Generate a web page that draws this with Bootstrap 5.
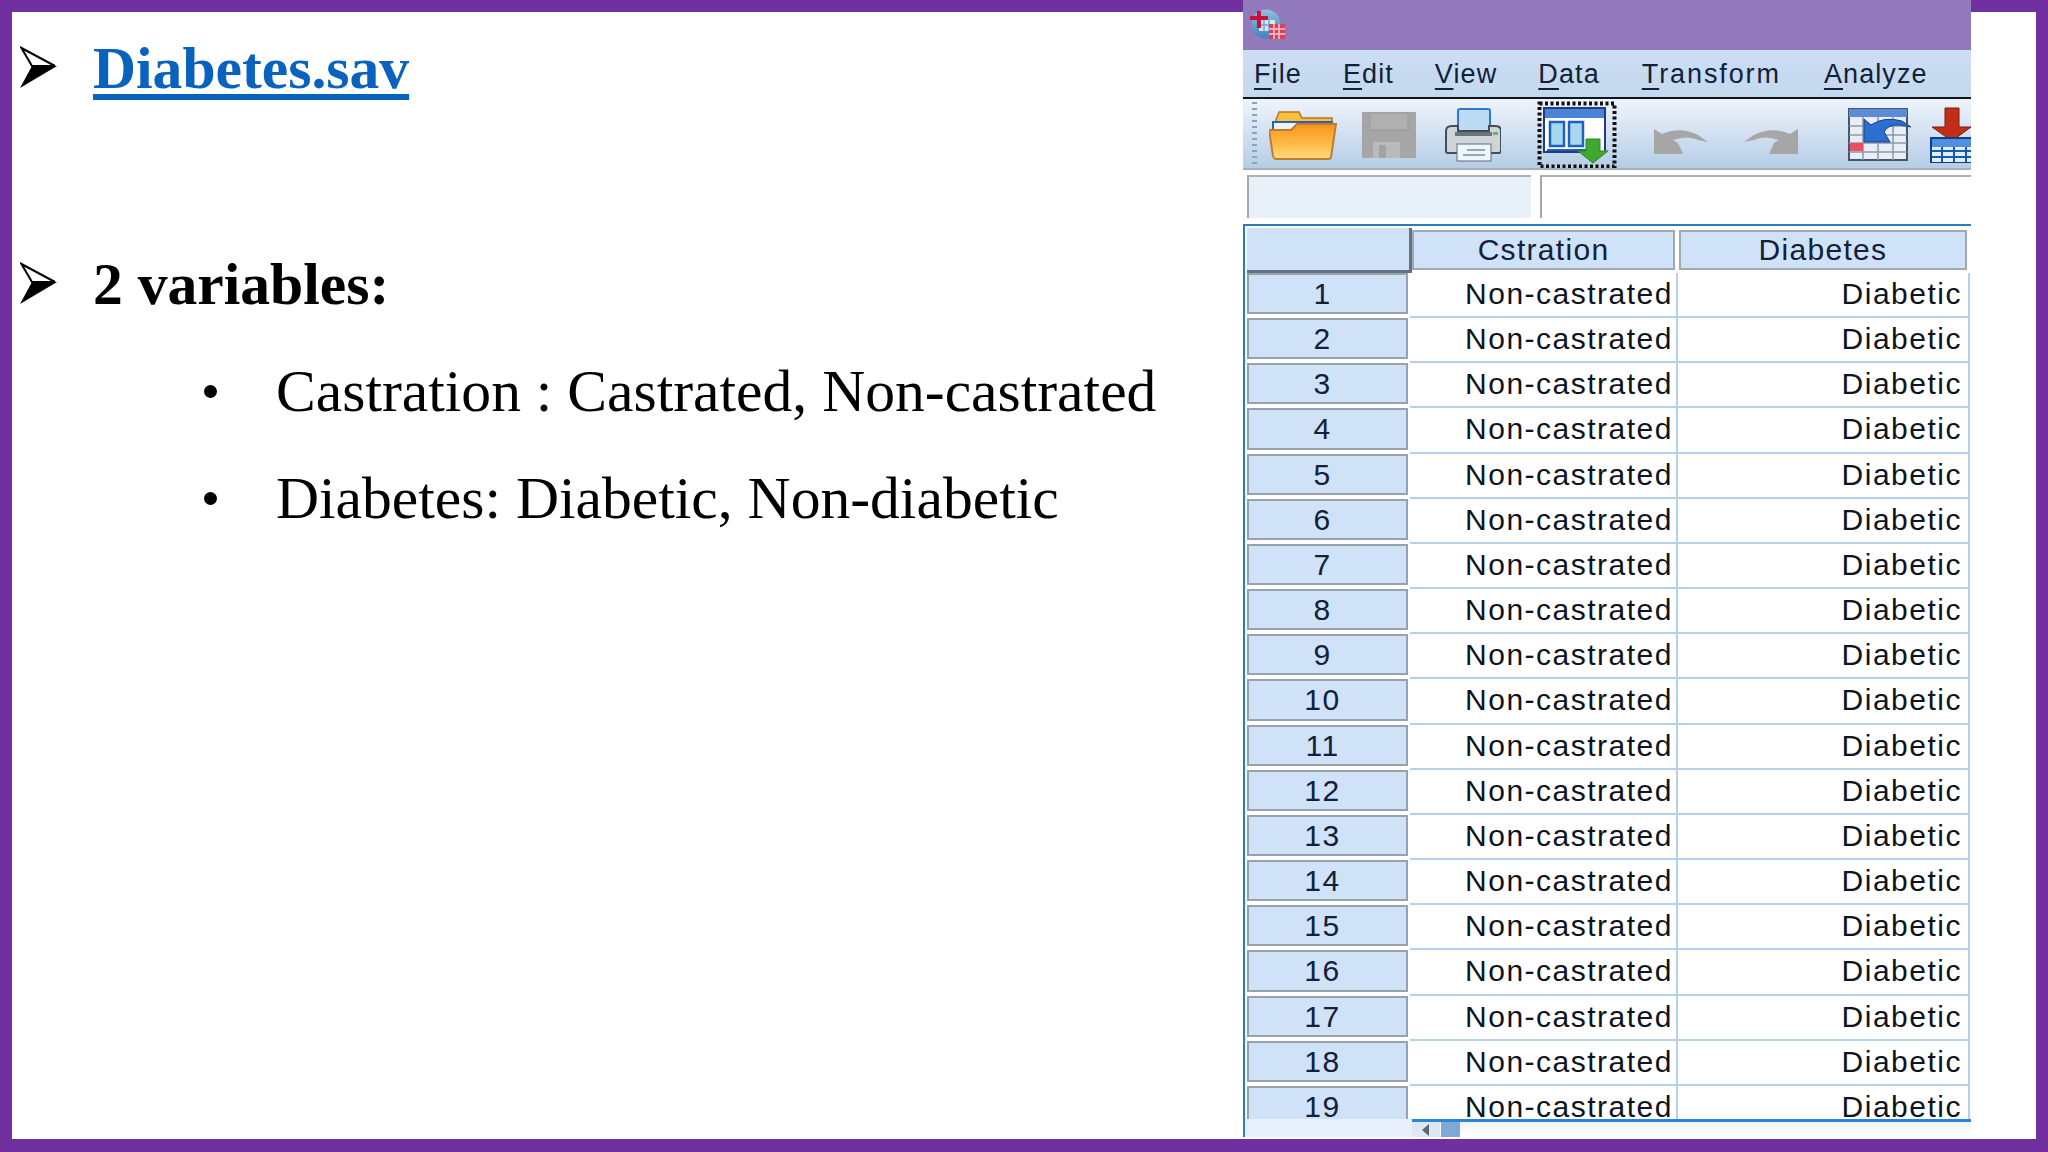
<!DOCTYPE html>
<html lang="en"><head><meta charset="utf-8"><title>Diabetes.sav</title>
<link href="https://cdn.jsdelivr.net/npm/bootstrap@5.3.0/dist/css/bootstrap.min.css" rel="stylesheet">
<style>
html,body{margin:0;height:1152px;overflow:hidden}
.slide-frame{width:2048px;height:1152px;background:#7030a0;padding:12px 12px 13px;font-family:"Liberation Serif",serif;color:#000}
.slide-canvas{background:#fff;height:1127px;display:flex;overflow:visible}
.notes{width:1231px;flex:none;padding-left:8px;font-size:59.6px;line-height:72px}
.head-line{display:flex;align-items:center;font-weight:700;gap:36px;height:72px}
.head-one{margin-top:20px}
.head-two{margin-top:144px}
.arrow-mark{width:37px;height:42px;flex:none;margin-top:-3px}
.head-line a{color:#0a62bf;text-decoration:underline;text-decoration-thickness:6px;text-underline-offset:6px}
.sub-list{list-style:none;margin:35px 0 0;padding:0 0 0 256px}
.sub-list li{position:relative;height:72px;margin-bottom:35px;line-height:72px;white-space:nowrap}
.sub-list li::before{content:"";position:absolute;left:-72px;top:30px;width:13px;height:13px;border-radius:50%;background:#000}
.spss-win{width:728px;flex:none;margin-top:-12px;height:1137px;background:#fff;font-family:"Liberation Sans",sans-serif;color:#12203a;display:flex;flex-direction:column;overflow:hidden}
.spss-title{height:50px;background:#9179bc;padding:9px 0 0 7px;flex:none}
.spss-title svg{width:36px;height:30px;display:block}
.spss-menu{height:49px;flex:none;background:linear-gradient(#cbdef3,#c4d8ee);border-bottom:2px solid #10151c;display:flex;font-size:27px;letter-spacing:1.1px;padding:2px 0 0 11px;gap:41px;align-items:center}
.spss-menu u{text-underline-offset:5px;text-decoration-thickness:2px}
.menu-wide{letter-spacing:1.9px;margin-left:1px}
.menu-last{margin-left:2px}
.spss-tools{height:71px;flex:none;background:linear-gradient(#eff4fc,#b5cde6);border-bottom:2px solid #a7b0ba;display:flex;align-items:center;position:relative;overflow:hidden;padding-top:2px}
.grip{width:5px;height:66px;margin-left:9px;flex:none;background:repeating-linear-gradient(#8fa3b8 0 2px,transparent 2px 6px)}
.ic{display:block;flex:none}
.i-open{width:68px;height:50px;margin-left:12px}
.i-save{width:54px;height:46px;margin-left:25px}
.i-print{width:56px;height:54px;margin-left:29px}
.i-data{width:80px;height:68px;margin-left:36px}
.i-undo{width:54px;height:26px;margin-left:37px;margin-top:15px}
.i-redo{width:54px;height:26px;margin-left:36px;margin-top:15px}
.i-vars{width:66px;height:54px;margin-left:50px}
.i-imp{width:44px;height:56px;margin-left:16px}
.cell-bar{height:54px;flex:none;display:flex;padding:5px 0 6px 4px;background:#fff;gap:9px}
.name-box{width:284px;background:#e8f0fa;border-top:2px solid #b0b0b0;border-left:2px solid #a8a8a8}
.value-box{flex:1;border-top:2px solid #b0b0b0;border-left:2px solid #a8a8a8}
.sheet{flex:1;border-top:2px solid #2c7cbc;border-left:2px solid #2c7cbc;display:flex;flex-direction:column;min-height:0}
.sheet-head{display:grid;grid-template-columns:167px 265px 290px;height:47px;flex:none;font-size:30px;letter-spacing:1.3px;line-height:42px;padding-top:2px}
.corner{margin-left:2px;background:#cfe2f8;border-right:3px solid #66727f;border-bottom:3px solid #66727f}
.col-title{background:#cfe2f8;border:2px solid #a0a9b3;text-align:center;margin:2px 2px 3px 0;line-height:35px}
.col-title:last-child{margin:2px 0 3px 2px}
.sheet-body{height:846px;flex:none;overflow:hidden;font-size:30px;letter-spacing:1.5px}
.sheet-line{display:grid;grid-template-columns:165px 268px 292px;height:45.17px;line-height:42px}
.row-no{margin:0 2px 4px 2px;background:#cfe2f8;border:2px solid #98a2ac;text-align:center;line-height:38px;padding-right:10px;overflow:hidden}
.sheet-line>span:nth-child(n+2){text-align:right;padding-right:3px;border-right:2px solid #b6d0ea;border-bottom:2px solid #b6d0ea;color:#0d1420}
.sheet-line>span:nth-child(3){padding-right:6px}
.sheet-foot{flex:1;display:flex;min-height:0}
.foot-left{width:167px;background:#e8f0fb}
.foot-bar{flex:1;border-top:3px solid #2c86d8;display:flex;background:linear-gradient(#eef3f8,#fff 14px)}
.foot-arrow{width:28px;background:#dfe8f2;display:flex;align-items:center;justify-content:center}
.foot-arrow svg{width:8px;height:12px}
.foot-thumb{width:19px;background:#7ea8d6;margin-left:1px}
</style></head><body>
<div class="slide-frame"><div class="slide-canvas">
<section class="notes">
<div class="head-line head-one"><svg class="arrow-mark" viewBox="0 0 37 42"><path d="M1.5 2 35 20H12z" fill="#fff" stroke="#000" stroke-width="2"/><path d="M0 42 12 20H37z" fill="#000"/></svg><a href="#">Diabetes.sav</a></div>
<div class="head-line head-two"><svg class="arrow-mark" viewBox="0 0 37 42"><path d="M1.5 2 35 20H12z" fill="#fff" stroke="#000" stroke-width="2"/><path d="M0 42 12 20H37z" fill="#000"/></svg><span>2 variables:</span></div>
<ul class="sub-list"><li>Castration : Castrated, Non-castrated</li><li>Diabetes: Diabetic, Non-diabetic</li></ul>
</section>
<section class="spss-win">
<div class="spss-title"><svg viewBox="0 0 36 30"><defs><linearGradient id="globe" x1="0" y1="0" x2="0" y2="1"><stop offset="0" stop-color="#8fc0e2"/><stop offset="1" stop-color="#3f84bb"/></linearGradient></defs><circle cx="16" cy="15" r="14.500" fill="url(#globe)"/><path d="M9 11h16v11H9z" fill="#d7e6f2"/><path d="M9 16h16M14 11v11M19 11v11" stroke="#7aa4c8" stroke-width="1.500"/><path d="M9 2v17M0 9h18" stroke="#c8103a" stroke-width="4"/><rect x="19" y="15" width="16" height="15" fill="#d9405e"/><path d="M19 20h16M19 25h16M24 15v15M29 15v15" stroke="#f6c6d0" stroke-width="1.500"/></svg></div>
<nav class="spss-menu"><span><u>F</u>ile</span><span><u>E</u>dit</span><span><u>V</u>iew</span><span><u>D</u>ata</span><span class="menu-wide"><u>T</u>ransform</span><span class="menu-last"><u>A</u>nalyze</span></nav>
<div class="spss-tools"><div class="grip"></div>
<svg class="ic i-open" viewBox="0 0 68 50"><path d="M7 10 10 2h20l3 6h30v6H7z" fill="#f6c23a" stroke="#b9742a" stroke-width="1.500"/><path d="M4 12h59v20H4z" fill="#eef4fb" stroke="#2a62b8" stroke-width="2"/><defs><linearGradient id="fold" x1="0" y1="0" x2="0" y2="1"><stop offset="0" stop-color="#f8941a"/><stop offset=".55" stop-color="#ffb845"/><stop offset="1" stop-color="#ffdf80"/></linearGradient></defs><path d="M0 20h22l6-6h39l-5 33q0 2-3 2H7q-2 0-3-3z" fill="url(#fold)" stroke="#c47a2c" stroke-width="2"/></svg>
<svg class="ic i-save" viewBox="0 0 54 46"><rect width="54" height="46" rx="1" fill="#a6a6a6"/><rect x="8" y="1" width="38" height="17" fill="#b0b0b0" stroke="#9b9b9b"/><rect x="11" y="30" width="27" height="16" fill="#bababa"/><rect x="17" y="33" width="7" height="13" fill="#a3a3a3"/></svg>
<svg class="ic i-print" viewBox="0 0 56 54"><rect x="13" y="1" width="32" height="22" rx="2" fill="#bcdcf6" stroke="#2b78d0" stroke-width="2"/><path d="M1 23q0-5 6-5h6v5h31v-5h6q6 0 6 5v20q0 2-3 2H3q-2 0-2-2z" fill="#cfd4d9" stroke="#444c55" stroke-width="2"/><rect x="10" y="24" width="37" height="4" fill="#6b747d"/><rect x="48" y="24" width="5" height="3" fill="#5dbb58"/><rect x="12" y="36" width="34" height="17" fill="#eef6fd" stroke="#5e6a76"/><path d="M22 42h18M18 47h22" stroke="#7c8da0" stroke-width="1.500"/></svg>
<svg class="ic i-data" viewBox="0 0 80 68"><rect x="2.500" y="2.500" width="75" height="63" fill="none" stroke="#111" stroke-width="4" stroke-dasharray="3 2.500"/><rect x="7" y="7" width="61" height="44" fill="#fff" stroke="#233a8a" stroke-width="2"/><rect x="8" y="8" width="59" height="9" fill="#4a84d6"/><rect x="13" y="21" width="14" height="24" fill="#a8d8f0" stroke="#1d62b8" stroke-width="2.500"/><rect x="32" y="21" width="14" height="24" fill="#a8d8f0" stroke="#1d62b8" stroke-width="2.500"/><path d="M10 49h40" stroke="#1d62b8" stroke-width="2"/><path d="M49 38h14v12h8L56 62 41 50h8z" fill="#3ea82f" stroke="#2a8a24"/></svg>
<svg class="ic i-undo" viewBox="0 0 54 26"><path d="M0 0 8 5Q26-3 44 6L54 13 44 11Q34 6 19 11L24 14 29 25H0z" fill="#a6a6a6"/></svg>
<svg class="ic i-redo" viewBox="0 0 54 26"><path d="M54 0 46 5Q28-3 10 6L0 13 10 11Q20 6 35 11L30 14 25 25H54z" fill="#a6a6a6"/></svg>
<svg class="ic i-vars" viewBox="0 0 66 54"><rect x="1" y="1" width="58" height="51" fill="#e8eef5" stroke="#46566a" stroke-width="2"/><rect x="1" y="1" width="58" height="8" fill="#5a8cd8"/><path d="M15 9v43M30 9v43M45 9v43M1 18h58M1 27h58M1 35h58M1 44h58" stroke="#8b99a8" stroke-width="1.500"/><rect x="2" y="35" width="13" height="8" fill="#ee4f60"/><path d="M16 11 23 17Q36 8 54 13L63 19 52 17Q40 16 36 24L42 34H16z" fill="#2b6fd0" stroke="#1a3f88"/></svg>
<svg class="ic i-imp" viewBox="0 0 44 56"><path d="M15 1h14v19h12L22 34 2 20h13z" fill="#c22e16" stroke="#7e1a10"/><rect x="1" y="31" width="50" height="25" fill="#dff0fb" stroke="#0d3f90" stroke-width="2"/><rect x="2" y="32" width="48" height="8" fill="#4f90e0"/><path d="M1 44h50M1 50h50M12 40v15M24 40v15M36 40v15" stroke="#1658b8" stroke-width="2"/></svg>
</div>
<div class="cell-bar"><div class="name-box"></div><div class="value-box"></div></div>
<div class="sheet">
<div class="sheet-head"><div class="corner"></div><div class="col-title">Cstration</div><div class="col-title">Diabetes</div></div>
<div class="sheet-body">
<div class="sheet-line"><span class="row-no">1</span><span>Non-castrated</span><span>Diabetic</span></div>
<div class="sheet-line"><span class="row-no">2</span><span>Non-castrated</span><span>Diabetic</span></div>
<div class="sheet-line"><span class="row-no">3</span><span>Non-castrated</span><span>Diabetic</span></div>
<div class="sheet-line"><span class="row-no">4</span><span>Non-castrated</span><span>Diabetic</span></div>
<div class="sheet-line"><span class="row-no">5</span><span>Non-castrated</span><span>Diabetic</span></div>
<div class="sheet-line"><span class="row-no">6</span><span>Non-castrated</span><span>Diabetic</span></div>
<div class="sheet-line"><span class="row-no">7</span><span>Non-castrated</span><span>Diabetic</span></div>
<div class="sheet-line"><span class="row-no">8</span><span>Non-castrated</span><span>Diabetic</span></div>
<div class="sheet-line"><span class="row-no">9</span><span>Non-castrated</span><span>Diabetic</span></div>
<div class="sheet-line"><span class="row-no">10</span><span>Non-castrated</span><span>Diabetic</span></div>
<div class="sheet-line"><span class="row-no">11</span><span>Non-castrated</span><span>Diabetic</span></div>
<div class="sheet-line"><span class="row-no">12</span><span>Non-castrated</span><span>Diabetic</span></div>
<div class="sheet-line"><span class="row-no">13</span><span>Non-castrated</span><span>Diabetic</span></div>
<div class="sheet-line"><span class="row-no">14</span><span>Non-castrated</span><span>Diabetic</span></div>
<div class="sheet-line"><span class="row-no">15</span><span>Non-castrated</span><span>Diabetic</span></div>
<div class="sheet-line"><span class="row-no">16</span><span>Non-castrated</span><span>Diabetic</span></div>
<div class="sheet-line"><span class="row-no">17</span><span>Non-castrated</span><span>Diabetic</span></div>
<div class="sheet-line"><span class="row-no">18</span><span>Non-castrated</span><span>Diabetic</span></div>
<div class="sheet-line"><span class="row-no">19</span><span>Non-castrated</span><span>Diabetic</span></div>
</div>
<div class="sheet-foot"><div class="foot-left"></div><div class="foot-bar"><div class="foot-arrow"><svg viewBox="0 0 8 12"><path d="M7 0V12L0 6z" fill="#5a6672"/></svg></div><div class="foot-thumb"></div></div></div>
</div>
</section>
</div></div>
<script src="https://cdn.jsdelivr.net/npm/bootstrap@5.3.0/dist/js/bootstrap.bundle.min.js"></script>
</body></html>
